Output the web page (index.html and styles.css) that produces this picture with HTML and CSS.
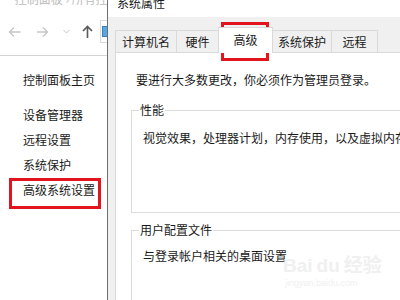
FILE: index.html
```html
<!DOCTYPE html>
<html lang="zh-CN">
<head>
    <meta charset="UTF-8">
    <title>系统属性</title>
    <link rel="stylesheet" href="styles.css">
</head>
<body>
    <div class="explorer">
        <div class="ex-title"><span>— 控制面板 › 所有控</span></div>
        <div class="ex-nav">
            <svg class="nav-back" width="13" height="12" viewBox="0 0 13 12"><path d="M12.5 6H1.5M6 1.5L1.5 6 6 10.5" fill="none" stroke="#c6c6c6" stroke-width="1.3"/></svg>
            <svg class="nav-fwd" width="12" height="12" viewBox="0 0 12 12"><path d="M0 6h10.5M6 1.5L10.5 6 6 10.5" fill="none" stroke="#c6c6c6" stroke-width="1.3"/></svg>
            <svg class="nav-chev" width="7" height="5" viewBox="0 0 7 5"><path d="M.5 1l3 3 3-3" fill="none" stroke="#c6c6c6" stroke-width="1"/></svg>
            <svg class="nav-up" width="11" height="13" viewBox="0 0 11 13"><path d="M5.5 13V1.5M1 6l4.5-4.5L10 6" fill="none" stroke="#5a5a5a" stroke-width="1.6"/></svg>
            <div class="address"><span class="addr-icon"></span></div>
        </div>
        <ul class="side">
            <li class="home">控制面板主页</li>
            <li>设备管理器</li>
            <li>远程设置</li>
            <li>系统保护</li>
            <li>高级系统设置</li>
        </ul>
        <div class="mark mark-side"></div>
    </div>

    <div class="dialog">
        <div class="dlg-title"><span>系统属性</span></div>
        <div class="tabs">
            <div class="tab t-name">计算机名</div>
            <div class="tab t-hw">硬件</div>
            <div class="tab t-adv active">高级</div>
            <div class="tab t-prot">系统保护</div>
            <div class="tab t-remote">远程</div>
        </div>
        <div class="panel">
            <p class="note">要进行大多数更改，你必须作为管理员登录。</p>
            <fieldset class="group group-perf">
                <legend>性能</legend>
                <p>视觉效果，处理器计划，内存使用，以及虚拟内存</p>
            </fieldset>
            <fieldset class="group group-profile">
                <legend>用户配置文件</legend>
                <p>与登录帐户相关的桌面设置</p>
            </fieldset>
        </div>
        <div class="mark mark-tab"></div>
        <div class="watermark">
            <div class="wm-logo">Bai<span class="wm-du">du</span>经验</div>
            <div class="wm-url">jingyan.baidu.com</div>
        </div>
    </div>
</body>
</html>
```

FILE: styles.css
```css
* {
    box-sizing: border-box;
}
body {
    margin: 0;
    width: 400px;
    height: 300px;
    overflow: hidden;
    display: flex;
    font-family: "Noto Sans CJK SC", "Liberation Sans", sans-serif;
    font-size: 12px;
    color: #1a1a1a;
    background: #fff;
}

/* explorer window on the left */
.explorer {
    position: relative;
    width: 108px;
    flex: none;
    background: #fff;
    border-right: 1px solid #6e6e6e;
    overflow: hidden;
}
.ex-title {
    height: 8px;
    overflow: hidden;
    color: #bcbcbc;
    white-space: nowrap;
}
.ex-title span {
    display: block;
    line-height: 12px;
    margin-top: -7px;
}
.ex-nav {
    display: flex;
    align-items: center;
    height: 48px;
    padding-left: 8px;
    border-bottom: 1px solid #d4d4d4;
}
.ex-nav > * {
    flex: none;
}
.nav-back {
    margin-right: 16px;
}
.nav-fwd {
    margin-right: 14px;
}
.nav-chev {
    margin-right: 12px;
}
.nav-up {
    margin-right: 7px;
}
.address {
    width: 60px;
    height: 23px;
    border: 1px solid #d9d9d9;
    padding: 5px 0 0 1px;
}
.addr-icon {
    display: block;
    width: 6px;
    height: 11px;
    background: #5aa7e0;
    border: 1px solid #3b7fb8;
}
.side {
    list-style: none;
    margin: 0;
    padding: 16px 0 0 23px;
}
.side li {
    line-height: 16px;
    margin-bottom: 9px;
    white-space: nowrap;
}
.side li.home {
    margin-bottom: 19px;
}

/* red annotation boxes */
.mark {
    position: absolute;
    border: 3px solid #e2141d;
}
.mark-side {
    left: 9px;
    top: 178px;
    width: 92px;
    height: 31px;
}
.mark-tab {
    left: 113px;
    top: 22px;
    width: 48px;
    height: 39px;
}

/* system properties dialog */
.dialog {
    position: relative;
    flex: 1;
    background: #f0f0f0;
    overflow: hidden;
}
.dlg-title {
    height: 17px;
    background: #fff;
    padding-left: 9px;
    overflow: hidden;
}
.dlg-title span {
    display: block;
    line-height: 12px;
    margin-top: -3px;
}
.tabs {
    display: flex;
    align-items: flex-end;
    padding: 10px 0 0 7px;
    position: relative;
    z-index: 1;
}
.tab {
    height: 22px;
    line-height: 21px;
    text-align: center;
    border: 1px solid #d9d9d9;
    border-bottom: none;
    background: #f0f0f0;
    margin-left: -1px;
    white-space: nowrap;
}
.tab:first-child {
    margin-left: 0;
}
.t-name { width: 62px; }
.t-hw { width: 43px; }
.t-adv { width: 55px; }
.t-prot { width: 60px; }
.t-remote { width: 47px; }
.tab.active {
    height: 26px;
    line-height: 24px;
    background: #fff;
    margin-bottom: -1px;
}
.panel {
    margin-left: 7px;
    width: 400px;
    height: 260px;
    background: #fff;
    border: 1px solid #d9d9d9;
    padding: 19px 0 0 15px;
}
.note {
    margin: 0 0 15px 5px;
    line-height: 16px;
    white-space: nowrap;
}
.group {
    margin: 0;
    width: 380px;
    border: 1px solid #dcdcdc;
    padding: 0 0 0 11px;
}
.group legend {
    margin-left: -4px;
    padding: 0 1px;
    line-height: 14px;
}
.group p {
    margin: 13px 0 0 0;
    line-height: 16px;
    white-space: nowrap;
}
.group-perf {
    height: 110px;
}
.group-profile {
    margin-top: 10px;
    height: 90px;
}
.group-profile p {
    margin-top: 11px;
}

/* faint site watermark */
.watermark {
    position: absolute;
    left: 175px;
    top: 254px;
    color: #f0f0f0;
    font-family: "Liberation Sans", "Noto Sans CJK SC", sans-serif;
}
.wm-logo {
    font-size: 19px;
    font-weight: bold;
    line-height: 24px;
    white-space: nowrap;
}
.wm-du {
    margin: 0 4px;
}
.wm-url {
    font-size: 9px;
    line-height: 10px;
    padding-left: 2px;
}
```
